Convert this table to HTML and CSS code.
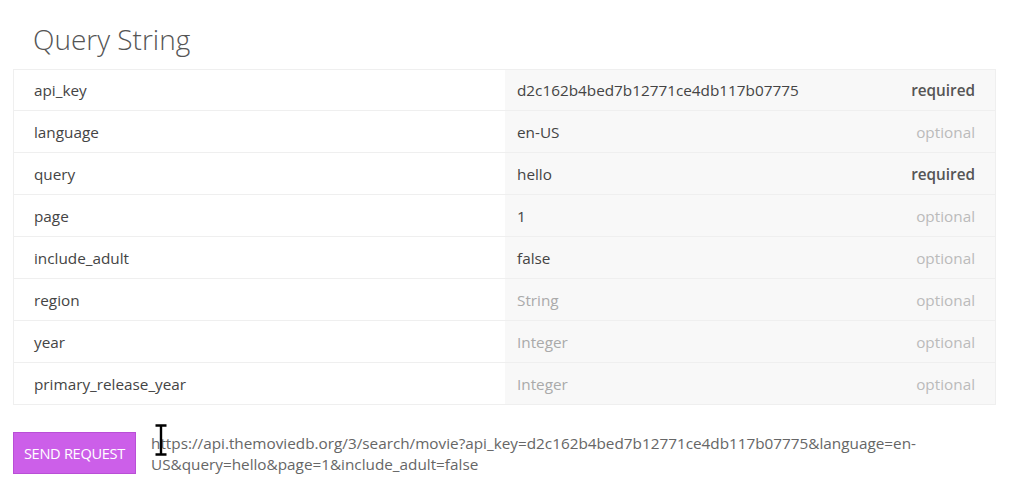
FILE: index.html
```html
<!DOCTYPE html>
<html>
<head>
<meta charset="utf-8">
<link rel="stylesheet" href="styles.css">
</head>
<body>
<div class="page">
  <h2 class="title">Query String</h2>
  <div class="params">
    <div class="row"><div class="name">api_key</div><div class="val"><span class="v">d2c162b4bed7b12771ce4db117b07775</span><span class="req">required</span></div></div>
    <div class="row"><div class="name">language</div><div class="val"><span class="v">en-US</span><span class="opt">optional</span></div></div>
    <div class="row"><div class="name">query</div><div class="val"><span class="v">hello</span><span class="req">required</span></div></div>
    <div class="row"><div class="name">page</div><div class="val"><span class="v">1</span><span class="opt">optional</span></div></div>
    <div class="row"><div class="name">include_adult</div><div class="val"><span class="v">false</span><span class="opt">optional</span></div></div>
    <div class="row"><div class="name">region</div><div class="val"><span class="ph">String</span><span class="opt">optional</span></div></div>
    <div class="row"><div class="name">year</div><div class="val"><span class="ph">Integer</span><span class="opt">optional</span></div></div>
    <div class="row"><div class="name">primary_release_year</div><div class="val"><span class="ph">Integer</span><span class="opt">optional</span></div></div>
  </div>
  <div class="actions">
    <button class="send">SEND REQUEST</button>
    <div class="url">https://api.themoviedb.org/3/search/movie?api_key=d2c162b4bed7b12771ce4db117b07775&amp;language=en-US&amp;query=hello&amp;page=1&amp;include_adult=false
      <svg class="cursor" width="12" height="32" viewBox="0 0 12 32"><path d="M0.5 1.5h11M0.5 30.5h11M6 1.5v29" stroke="#000" stroke-width="2.4" fill="none"/></svg>
    </div>
  </div>
</div>
</body>
</html>
```
FILE: styles.css
```css
html, body { margin: 0; padding: 0; background: #fff; }
body { font-family: "Open Sans", "Liberation Sans", sans-serif; color: #444; }
.page { padding: 0 18px 0 13px; }
.title {
  margin: 0;
  padding: 20px 0 0 20px;
  height: 69px;
  box-sizing: border-box;
  font-size: 28px;
  font-weight: 300;
  color: #555;
  line-height: 38px;
}
.params { border: 1px solid #efefef; border-bottom: none; }
.row { display: flex; height: 42px; border-bottom: 1px solid #efefef; box-sizing: border-box; }
.row:first-child { height: 41px; }
.name { width: 491px; padding-left: 20px; box-sizing: border-box; display: flex; align-items: center; font-size: 15.3px; color: #444; background: #fff; }
.val { flex: 1; background: #f8f8f8; display: flex; align-items: center; justify-content: space-between; padding: 0 20px 0 12px; font-size: 15.3px; }
.v { color: #444; }
.ph { color: #aaa; }
.req { font-weight: 600; color: #555; }
.opt { color: #bbb; }
.actions { display: flex; align-items: flex-start; margin-top: 27px; }
.send {
  width: 123px; height: 42px;
  background: #cc5fe9;
  border: 1px solid #b94fd6;
  color: #fff;
  font-family: "Open Sans", "Liberation Sans", sans-serif;
  font-size: 14.6px;
  padding: 0;
  margin: 0;
  letter-spacing: -0.3px;
}
.url {
  position: relative;
  margin-left: 15px;
  width: 800px;
  font-size: 15.3px;
  line-height: 21px;
  color: #666;
  padding-top: 1px;
}
.cursor { position: absolute; left: 4px; top: -8px; }
```
